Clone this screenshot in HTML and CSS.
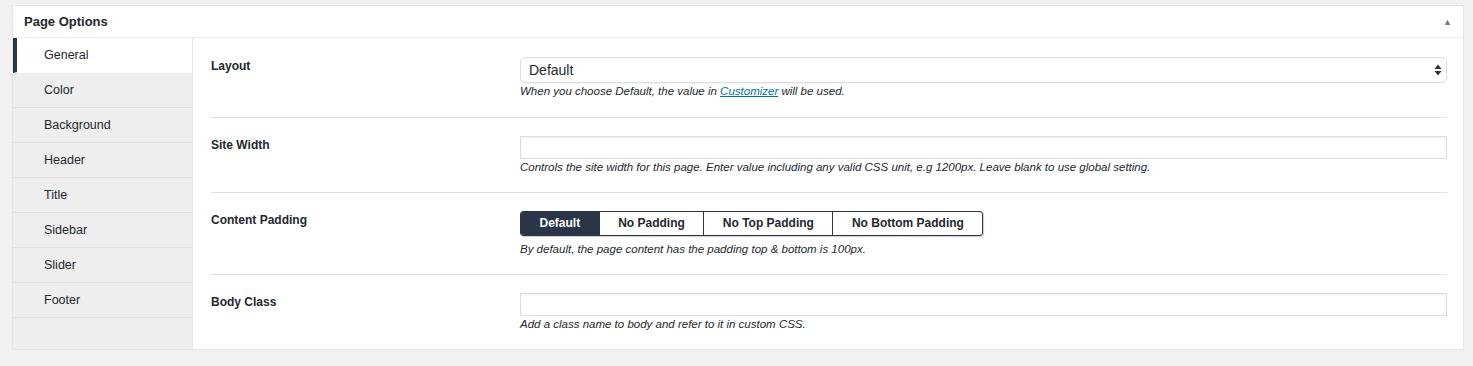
FILE: index.html
```html
<!DOCTYPE html>
<html lang="en">
<head>
    <meta charset="UTF-8">
    <title>Page Options</title>
    <link rel="stylesheet" href="styles.css">
</head>
<body>
    <div class="postbox">
        <div class="postbox-header">
            <h2>Page Options</h2>
            <span class="toggle">&#9650;</span>
        </div>
        <div class="postbox-inside">
            <ul class="tabs">
                <li class="active">General</li>
                <li>Color</li>
                <li>Background</li>
                <li>Header</li>
                <li>Title</li>
                <li>Sidebar</li>
                <li>Slider</li>
                <li>Footer</li>
            </ul>
            <div class="panel">
                <div class="field first">
                    <label class="field-label">Layout</label>
                    <div class="field-control">
                        <div class="select">
                            <span>Default</span>
                            <svg width="8" height="12" viewBox="0 0 8 12"><path d="M4 0.5 L7.5 5 L0.5 5 Z M0.5 7 L7.5 7 L4 11.5 Z" fill="#333"/></svg>
                        </div>
                        <p class="desc">When you choose Default, the value in <a href="#">Customizer</a> will be used.</p>
                    </div>
                </div>
                <div class="field">
                    <label class="field-label">Site Width</label>
                    <div class="field-control">
                        <input type="text" class="text-input">
                        <p class="desc">Controls the site width for this page. Enter value including any valid CSS unit, e.g 1200px. Leave blank to use global setting.</p>
                    </div>
                </div>
                <div class="field">
                    <label class="field-label">Content Padding</label>
                    <div class="field-control">
                        <div class="button-set">
                            <span class="btn selected">Default</span>
                            <span class="btn">No Padding</span>
                            <span class="btn">No Top Padding</span>
                            <span class="btn">No Bottom Padding</span>
                        </div>
                        <p class="desc">By default, the page content has the padding top &amp; bottom is 100px.</p>
                    </div>
                </div>
                <div class="field last">
                    <label class="field-label">Body Class</label>
                    <div class="field-control">
                        <input type="text" class="text-input">
                        <p class="desc">Add a class name to body and refer to it in custom CSS.</p>
                    </div>
                </div>
            </div>
        </div>
    </div>
</body>
</html>
```

FILE: styles.css
```css
body {
    font-family: "Liberation Sans", Arial, sans-serif;
    font-size: 13px;
    color: #23282d;
    margin: 0;
    padding: 5px 9px 0 12px;
    background-color: #f1f1f1;
}
.postbox {
    background-color: #fff;
    border: 1px solid #e5e5e5;
    box-shadow: 0 1px 1px rgba(0, 0, 0, 0.04);
}
.postbox-header {
    display: flex;
    justify-content: space-between;
    align-items: center;
    height: 31px;
    border-bottom: 1px solid #eee;
    padding: 0 11px 0 11px;
}
.postbox-header h2 {
    margin: 0;
    font-size: 13px;
    font-weight: bold;
    color: #23282d;
}
.toggle {
    font-size: 9px;
    color: #72777c;
}
.postbox-inside {
    display: flex;
}
.tabs {
    list-style: none;
    margin: 0;
    padding: 0 0 31px;
    width: 179px;
    background-color: #eee;
    border-right: 1px solid #e5e5e5;
    font-size: 12.5px;
}
.tabs li {
    height: 34px;
    line-height: 34px;
    padding-left: 31px;
    border-bottom: 1px solid #e1e1e1;
    color: #23282d;
}
.tabs li.active {
    background-color: #fff;
    border-left: 4px solid #2a3548;
    padding-left: 27px;
    border-bottom-color: #fff;
}
.panel {
    flex: 1;
    padding: 0 16px 0 18px;
}
.field {
    display: flex;
    border-bottom: 1px solid #e1e1e1;
    padding: 18px 0;
}
.field.first {
    padding: 19px 0;
}
.field.last {
    border-bottom: none;
}
.field-label {
    width: 309px;
    padding-top: 2px;
    font-size: 12px;
    font-weight: bold;
    line-height: 15px;
}
.field-control {
    flex: 1;
}
.select {
    display: flex;
    justify-content: space-between;
    align-items: center;
    height: 24px;
    padding: 0 4px 0 8px;
    border: 1px solid #ddd;
    border-radius: 5px;
    font-size: 14px;
    box-shadow: 0 1px 1px rgba(0, 0, 0, 0.05);
}
.text-input {
    display: block;
    width: 100%;
    box-sizing: border-box;
    height: 23px;
    margin: 0;
    border: 1px solid #ddd;
    box-shadow: inset 0 1px 2px rgba(0, 0, 0, 0.07);
}
.desc {
    margin: 2px 0 0;
    font-size: 11.5px;
    line-height: 13px;
    font-style: italic;
    color: #23282d;
}
.desc a {
    color: #0073aa;
}
.button-set {
    display: inline-flex;
    border: 1px solid #2a3548;
    border-radius: 3px;
    overflow: hidden;
    box-shadow: 1px 1px 1px rgba(0, 0, 0, 0.2);
    margin-bottom: 5px;
}
.btn {
    height: 23px;
    line-height: 23px;
    padding: 0 18.5px;
    font-size: 12px;
    font-weight: bold;
    border-left: 1px solid #2a3548;
}
.btn:first-child {
    border-left: none;
}
.btn.selected {
    background-color: #2a3548;
    color: #fff;
}
```
